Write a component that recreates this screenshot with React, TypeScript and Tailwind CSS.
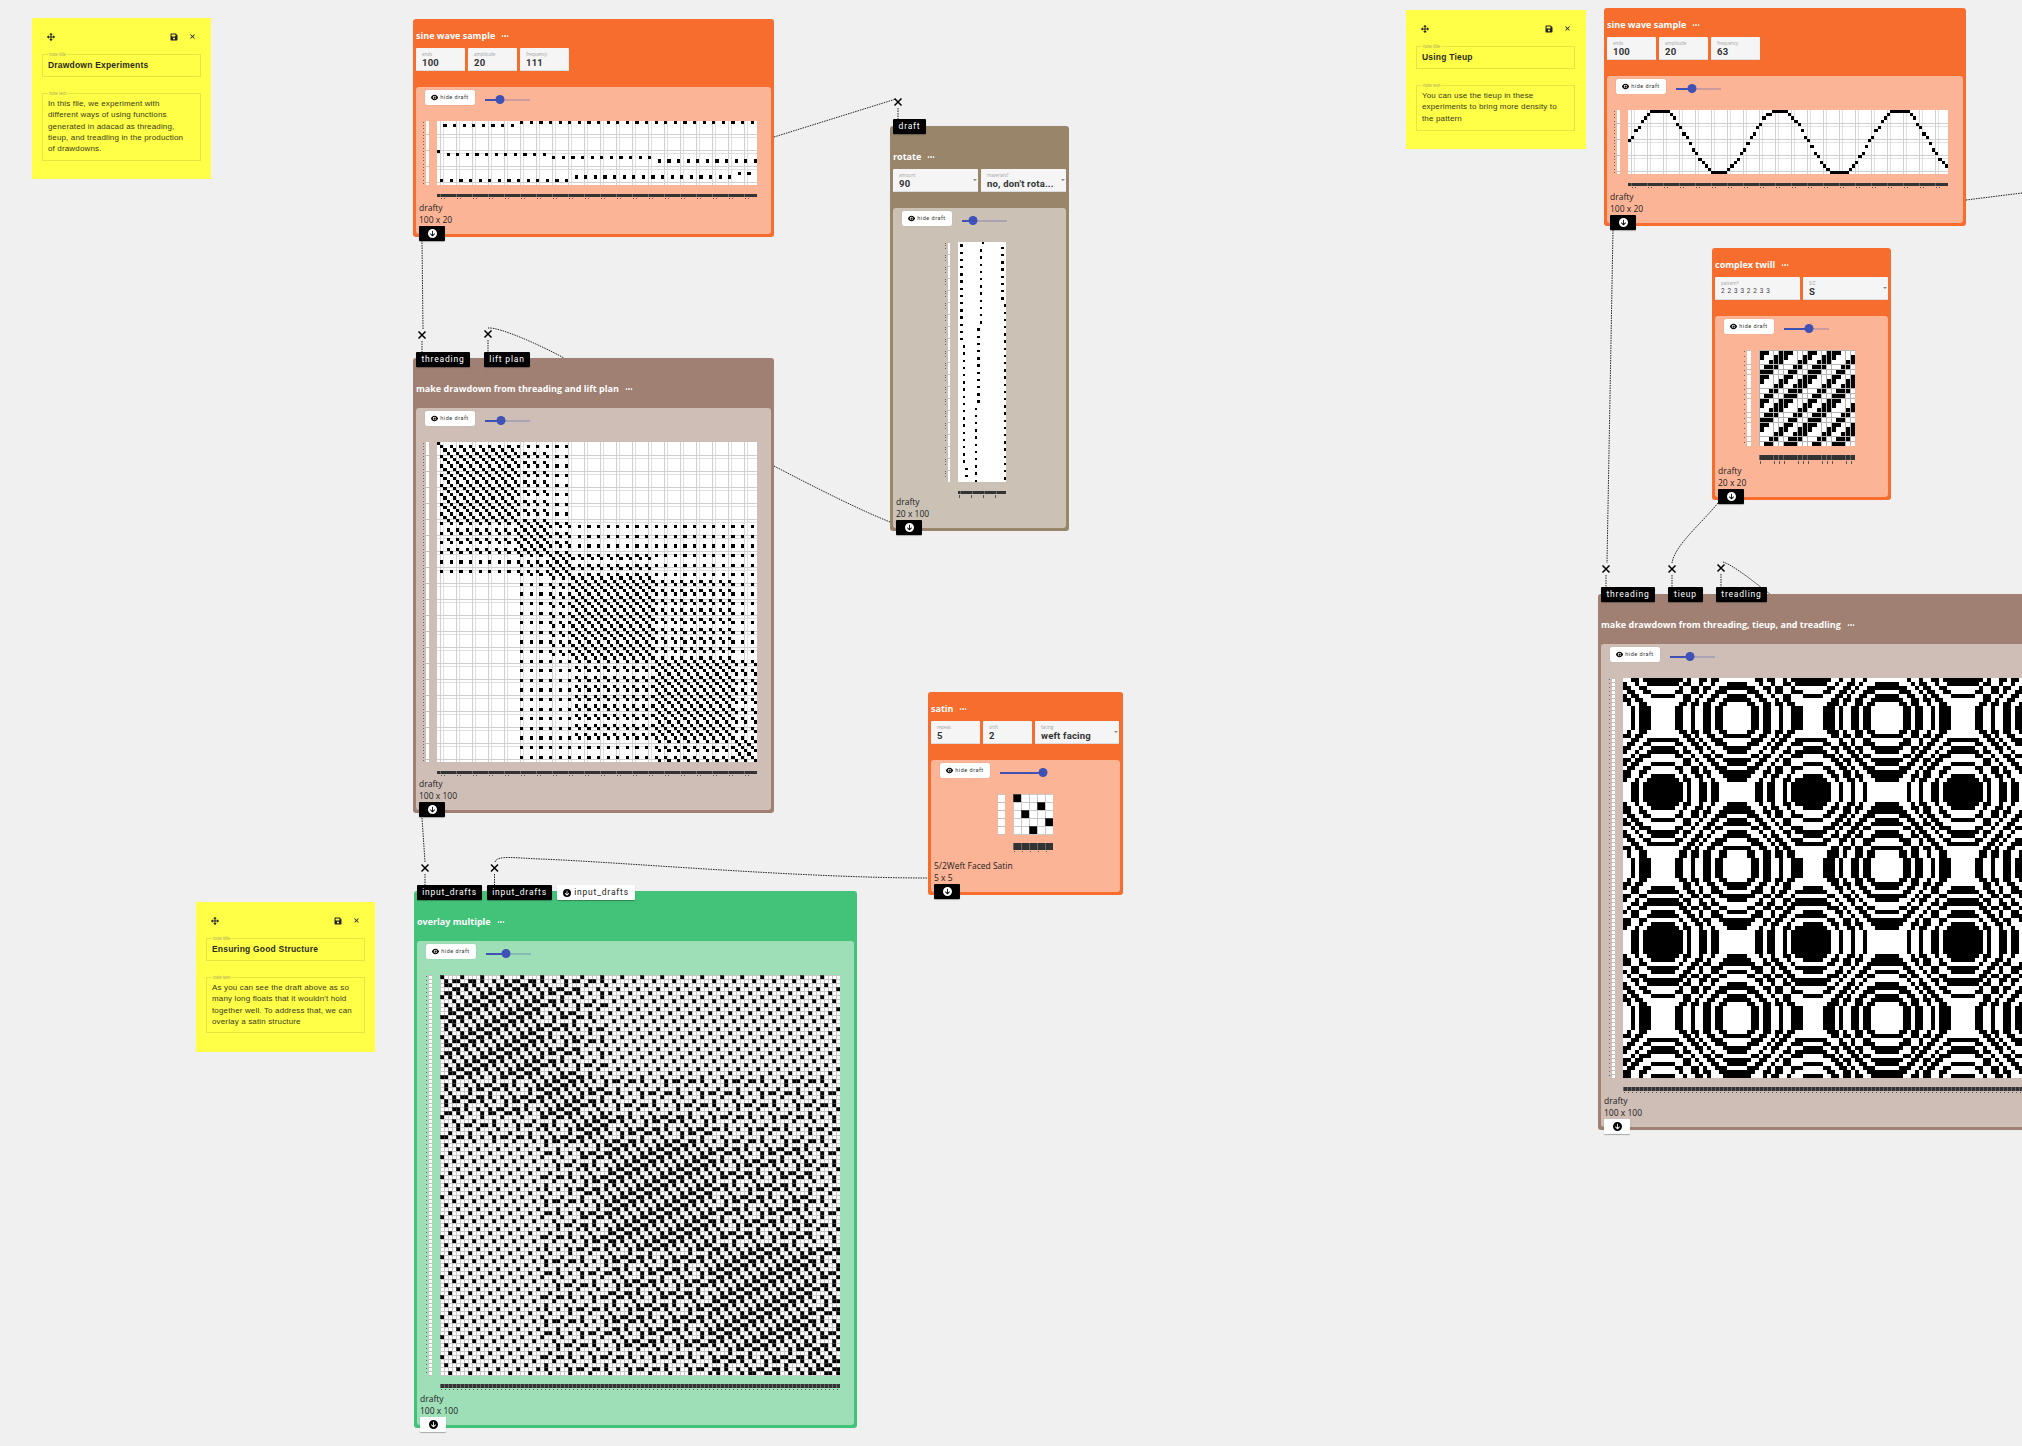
import type { ReactNode } from "react"
import { FaArrowsUpDownLeftRight, FaCircleArrowDown, FaEllipsis, FaEye, FaFloppyDisk, FaXmark } from "react-icons/fa6"

type Cell = (r: number, c: number) => boolean

// sine wave sample, frequency 111: three slow bands from aliasing
function waveA(c: number) {
  if (c % 3 === 2) return c < 25 ? 1 : 0
  if (c % 3 === 1) return c < 42 ? 18 : c < 93 ? 17 : 16
  if (c === 0) return 9
  return c < 35 ? 10 : c < 69 ? 11 : 12
}

// sine wave sample, frequency 63
function waveB(c: number) {
  const v = Math.floor(10 - 10.05 * Math.sin((2 * Math.PI * (c + 0.1)) / 37.5))
  return Math.max(0, Math.min(19, v))
}

const twillRow = [1, 1, 0, 0, 1, 1, 1, 0, 0, 0]
const satinCells = [0, 3, 1, 4, 2]

const sineA: Cell = (r, c) => waveA(c) === r
const sineB: Cell = (r, c) => waveB(c) === r
const rotated: Cell = (r, c) => 19 - waveA(r) === c
const drawdownA: Cell = (r, c) => waveA(r) === waveA(c)
const satin: Cell = (r, c) => satinCells[r % 5] === c % 5
const twill: Cell = (r, c) => twillRow[(r + c) % 10] === 1
const overlay: Cell = (r, c) => drawdownA(r, c) || satin(r, c)
const drawdownB: Cell = (r, c) => twillRow[(waveB(r) - waveB(c) + 107) % 10] === 1

// the canvas is scaled down, so only some of the cell borders survive
function gridPositions(n: number, cs: number, offset: number) {
  const total = Math.round(n * cs)
  const out: number[] = []
  if (Number.isInteger(cs)) {
    for (let p = 0; p <= total; p += cs) out.push(p)
    return out
  }
  if (cs === 3.2) {
    for (let p = offset; p < total; p += 16) out.push(p)
    return out
  }
  for (let p = 0; p < total; p++) {
    if (((p + 0.5) * (10 / cs)) % 10 < 1.2) out.push(p)
  }
  return out
}

function cellsPath(rows: number, cols: number, cs: number, on: Cell) {
  let d = ""
  for (let r = 0; r < rows; r++) {
    const y0 = Math.round(r * cs)
    const y1 = Math.round((r + 1) * cs)
    let c = 0
    while (c < cols) {
      if (!on(r, c)) {
        c++
        continue
      }
      let e = c
      while (e < cols && on(r, e)) e++
      d += `M${Math.round(c * cs)} ${y0}H${Math.round(e * cs)}V${y1}H${Math.round(c * cs)}z`
      c = e
    }
  }
  return d
}

interface DraftProps {
  rows: number
  cols: number
  cs: number
  on: Cell
  grid?: boolean
  gridTop?: boolean
  className?: string
}

function Draft({ rows, cols, cs, on, grid = true, gridTop = false, className }: DraftProps) {
  const W = Math.round(cols * cs)
  const H = Math.round(rows * cs)
  const barH = cs < 3.5 ? 3 : cs === 4 ? 4 : cs === 4.8 ? 5 : 7
  const stripW = cs === 8 ? 7 : cs === 4.8 ? 4 : cs === 2.4 ? 2 : 3
  const tickH = cs === 2.4 || cs === 4.8 ? 3 : 1
  const stripX = 12 - stripW
  const xs = gridPositions(cols, cs, 3)
  const ys = gridPositions(rows, cs, 13)
  const xsExtra = cs === 3.2 ? gridPositions(cols, cs, 6) : []
  const ysExtra = cs === 3.2 ? gridPositions(rows, cs, 16) : []
  const ticks = cs === 2.4 ? [0, 12, 24, 36] : [...xs, ...xsExtra]
  const notches = cs === 2.4 ? Array.from({ length: 20 }, (_, i) => i * 12) : ys
  const lines = (px: number[], py: number[]) => `${px.map((x) => `M${x + 0.5} 0V${H}`).join("")}${py.map((y) => `M0 ${y + 0.5}H${W}`).join("")}`
  const gridPath = lines(xs, ys)
  const height = H + 9 + barH + 6

  return (
    <svg width={W + 20} height={height} shapeRendering="crispEdges" className={`block shrink-0 ${className ?? ""}`}>
      <rect x={stripX} y={0} width={stripW} height={H} fill="#fff" />
      {notches.map((y) => (
        <rect key={y} x={stripX - 1} y={y} width={stripW + 1} height={1} fill="#c6c1bd" />
      ))}
      {Array.from({ length: rows }, (_, i) =>
        cs === 2.4 && i % 5 > 2 ? null : (
          <rect key={i} x={cs === 8 ? stripX - 8 : stripX - 3} y={Math.round(i * cs) + (cs === 8 ? 4 : 1)} width={cs === 8 ? 2 : 1} height={1} fill="#666" />
        ),
      )}
      <g transform="translate(20 0)">
        <rect width={W} height={H} fill="#fff" />
        {grid && !gridTop && <path d={lines(xsExtra, ysExtra)} stroke="#e0e0e0" strokeWidth={1} fill="none" />}
        {grid && !gridTop && <path d={gridPath} stroke={cs === 3.2 ? "#d0d0d0" : "#c9c9c9"} strokeWidth={1} fill="none" />}
        <path d={cellsPath(rows, cols, cs, on)} fill="#000" />
        {grid && Number.isInteger(cs) && <path d={gridPath} stroke="#c9c9c9" strokeOpacity={0.3} strokeWidth={1} fill="none" />}
        {grid && gridTop && <path d={gridPath} stroke="#b4b4b4" strokeWidth={1} fill="none" />}
        <rect y={H + 9} width={W} height={barH} fill="#333" />
        {xs.map((x) => (
          <rect key={x} x={x} y={H + 9} width={1} height={barH} fill="#666" />
        ))}
        {ticks.map((x) => (
          <rect key={x} x={x + 1} y={H + 10 + barH} width={1} height={tickH} fill="#555" />
        ))}
      </g>
    </svg>
  )
}

function Slider({ value }: { value: number }) {
  return (
    <div className="relative ml-[10px] mt-[5px] flex h-[9px] w-[45px] items-center">
      <div className="h-[2px] bg-[#3f51b5]" style={{ width: `${value * 100}%` }} />
      <div className="h-[2px] flex-1 bg-[#3f51b5]/25" />
      <div className="absolute h-[9px] w-[9px] -translate-x-1/2 rounded-full bg-[#3f51b5]" style={{ left: `${value * 100}%` }} />
    </div>
  )
}

function Param({ label, value, width, select, small }: { label: string; value: string; width: string; select?: boolean; small?: boolean }) {
  return (
    <div className={`relative h-full shrink-0 rounded-t-[1px] border-b border-[#dcdcdc] bg-[#f5f5f5] pl-[6px] pt-[3px] ${width}`}>
      <div className="text-[4.5px] leading-[6px] text-[#a3a3a3]">{label}</div>
      <div className={small ? "truncate text-[6.5px] leading-[11px] tracking-[0.6px] text-[#444] [font-family:'Roboto',sans-serif]" : "truncate text-[9.5px] font-bold leading-[11px] tracking-[0.2px] text-[#333] [font-family:'Roboto',sans-serif]"}>
        {value}
      </div>
      {select && <div className="absolute right-[1px] top-[10px] h-0 w-0 border-x-[2px] border-t-[2px] border-x-transparent border-t-[#888]" />}
    </div>
  )
}

function Pill({ children, width, light }: { children: ReactNode; width: string; light?: boolean }) {
  return (
    <div className={`flex h-[15px] items-center justify-center gap-[3px] rounded-[1px] text-[8.5px] tracking-[0.8px] shadow-[0_1px_1px_rgba(0,0,0,0.3)] [font-family:'Roboto',sans-serif] ${width} ${light ? "bg-white text-[#222]" : "bg-black text-white"}`}>
      {light && <FaCircleArrowDown className="text-[8px] text-black" />}
      {children}
    </div>
  )
}

const orange = { node: "border-[#f66d2e] bg-[#f66d2e]", panel: "bg-[#fcb496]" }
const brown = { node: "border-[#a08072] bg-[#a08072]", panel: "bg-[#cebeb6]" }
const tan = { node: "border-[#98856a] bg-[#98856a]", panel: "bg-[#cbc1b5]" }
const green = { node: "border-[#43c279] bg-[#43c279]", panel: "bg-[#9edfb8]" }

interface OpNodeProps {
  box: string
  theme: { node: string; panel: string }
  title: string
  params?: ReactNode
  inlets?: ReactNode
  inletTop?: string
  slider: number
  size: string
  name?: string
  lightButton?: boolean
  children: ReactNode
}

function OpNode({ box, theme, title, params, inlets, inletTop = "-top-[9px]", slider, size, name = "drafty", lightButton, children }: OpNodeProps) {
  return (
    <div className={`absolute flex flex-col rounded-[3px] border-[3px] ${box} ${theme.node}`}>
      {inlets && <div className={`absolute left-0 z-10 flex ${inletTop}`}>{inlets}</div>}
      <div className={`flex h-6 shrink-0 items-center gap-[6px] text-[9px] font-bold text-white ${inlets ? "mt-[16px]" : "mt-[2px]"}`}>
        {title}
        <FaEllipsis className="text-[8px]" />
      </div>
      {params && <div className="flex h-[23px] shrink-0 gap-[3px]">{params}</div>}
      <div className={`flex min-h-0 flex-1 flex-col rounded-[3px] ${theme.panel} ${params ? "mt-[16px]" : "mt-[7px]"}`}>
        <div className="mt-[3px] flex h-[15px] shrink-0 pl-[9px]">
          <div className="flex h-[15px] w-[50px] items-center justify-center gap-[2px] rounded-[2px] bg-white text-[5.5px] tracking-[0.5px] text-[#333] shadow-[0_0_1px_rgba(0,0,0,0.2)] [font-family:'Roboto',sans-serif]">
            <FaEye className="text-[7px] text-black" />
            hide draft
          </div>
          <Slider value={slider} />
        </div>
        <div className="mt-[16px] min-h-0 flex-1">{children}</div>
        <div className="pb-[8px] pl-[3px] text-[8.5px] leading-[12px] text-[#222]">
          <div>{name}</div>
          <div>{size}</div>
        </div>
      </div>
      <div className={`absolute -bottom-[7px] left-[3px] flex h-[15px] w-[26px] items-center justify-center rounded-[1px] shadow-[0_1px_1px_rgba(0,0,0,0.3)] ${lightButton ? "bg-white text-black" : "bg-black text-white"}`}>
        <FaCircleArrowDown className="text-[9px]" />
      </div>
    </div>
  )
}

function Note({ box, title, lines, bodyHeight }: { box: string; title: string; lines: string[]; bodyHeight: string }) {
  return (
    <div className={`absolute bg-[#ffff48] px-[10px] [font-family:'Liberation_Sans',sans-serif] ${box}`}>
      <div className="flex h-[36px] items-start pt-[15px] text-[#222]">
        <FaArrowsUpDownLeftRight className="ml-[5px] text-[8px]" />
        <FaFloppyDisk className="ml-auto mr-[11px] text-[8px]" />
        <FaXmark className="mr-[5px] text-[7px]" />
      </div>
      <div className="relative h-[23px] w-[159px] border border-[#e6e643] pl-[5px] text-[8.5px] font-bold leading-[21px] tracking-[0.2px] text-[#2b2b1c]">
        <span className="absolute -top-[3px] left-[5px] bg-[#ffff48] px-[1px] text-[4.5px] font-normal leading-[5px] tracking-normal text-[#a8a860]">note title</span>
        {title}
      </div>
      <div className={`relative mt-[16px] w-[159px] border border-[#e6e643] pl-[5px] pt-[4px] text-[8px] leading-[11.3px] tracking-[0.15px] text-[#3a3a20] ${bodyHeight}`}>
        <span className="absolute -top-[3px] left-[5px] bg-[#ffff48] px-[1px] text-[4.5px] leading-[5px] tracking-normal text-[#a8a860]">note text</span>
        {lines.map((l) => (
          <div key={l} className="whitespace-nowrap">
            {l}
          </div>
        ))}
      </div>
    </div>
  )
}

const wires = [
  "M422 240L423 329",
  "M422 341V352",
  "M488 340V352",
  "M488 328C500 327 540 345 564 358",
  "M774 137L896 99",
  "M898 108V119",
  "M774 466C820 490 860 510 890 522",
  "M422 818L425 862",
  "M425 874V885",
  "M494.5 874V885",
  "M495 862C497 855 515 858 540 859C620 862 800 878 928 878",
  "M1613 230L1607 563",
  "M1606 575V587",
  "M1718 503C1700 525 1675 545 1672 563",
  "M1672 575V587",
  "M1721 574V587",
  "M1723 562C1735 566 1755 583 1770 594",
  "M1966 200L2022 193",
]

const crosses = [
  [422, 335],
  [488, 334],
  [898, 102],
  [425, 868],
  [494.5, 868],
  [1606, 569],
  [1672, 569],
  [1721, 568],
]

export default function App() {
  return (
    <div className="relative h-[1446px] w-[2022px] overflow-hidden bg-[#f0f0f0] [font-family:'Open_Sans',sans-serif]">
      {/* connections */}
      <svg width={2022} height={1446} className="absolute inset-0">
        {wires.map((d) => (
          <path key={d} d={d} fill="none" stroke="#222" strokeWidth={1} strokeDasharray="1.5 1" />
        ))}
        {crosses.map(([x, y]) => (
          <path key={`${x}-${y}`} d={`M${x - 3.5} ${y - 3.5}L${x + 3.5} ${y + 3.5}M${x + 3.5} ${y - 3.5}L${x - 3.5} ${y + 3.5}`} stroke="#000" strokeWidth={1.5} />
        ))}
      </svg>

      {/* notes */}
      <Note
        box="left-[32px] top-[18px] h-[161px] w-[179px]"
        title="Drawdown Experiments"
        bodyHeight="h-[68px]"
        lines={["In this file, we experiment with", "different ways of using functions", "generated in adacad as threading,", "tieup, and treadling in the production", "of drawdowns."]}
      />
      <Note
        box="left-[196px] top-[902px] h-[150px] w-[179px]"
        title="Ensuring Good Structure"
        bodyHeight="h-[56px]"
        lines={["As you can see the draft above as so", "many long floats that it wouldn't hold", "together well. To address that, we can", "overlay a satin structure"]}
      />
      <Note
        box="left-[1406px] top-[10px] h-[139px] w-[180px]"
        title="Using Tieup"
        bodyHeight="h-[46px]"
        lines={["You can use the tieup in these", "experiments to bring more density to", "the pattern"]}
      />

      {/* left column */}
      <OpNode
        box="left-[413px] top-[19px] h-[218px] w-[361px]"
        theme={orange}
        title="sine wave sample"
        slider={0.33}
        size="100 x 20"
        params={
          <>
            <Param width="w-[49px]" label="ends" value="100" />
            <Param width="w-[49px]" label="amplitude" value="20" />
            <Param width="w-[49px]" label="frequency" value="111" />
          </>
        }
      >
        <Draft rows={20} cols={100} cs={3.2} on={sineA} className="ml-[1px]" />
      </OpNode>

      <OpNode
        box="left-[413px] top-[358px] h-[455px] w-[361px]"
        theme={brown}
        title="make drawdown from threading and lift plan"
        slider={0.35}
        size="100 x 100"
        inlets={
          <div className="flex gap-[14px]">
            <Pill width="w-[54px]">threading</Pill>
            <Pill width="w-[46px]">lift plan</Pill>
          </div>
        }
      >
        <Draft rows={100} cols={100} cs={3.2} on={drawdownA} className="ml-[1px]" />
      </OpNode>

      <OpNode
        box="left-[414px] top-[891px] h-[537px] w-[443px]"
        theme={green}
        title="overlay multiple"
        slider={0.45}
        size="100 x 100"
        lightButton
        inlets={
          <div className="flex gap-[5px]">
            <Pill width="w-[65px]">input_drafts</Pill>
            <Pill width="w-[65px]">input_drafts</Pill>
            <Pill width="w-[78px]" light>
              input_drafts
            </Pill>
          </div>
        }
      >
        <Draft rows={100} cols={100} cs={4} on={overlay} className="ml-[3px]" />
      </OpNode>

      {/* middle column */}
      <OpNode
        box="left-[890px] top-[126px] h-[405px] w-[179px]"
        theme={tan}
        title="rotate"
        slider={0.24}
        size="20 x 100"
        inletTop="-top-[10px]"
        inlets={<Pill width="w-[33px]">draft</Pill>}
        params={
          <>
            <Param width="w-[85px]" label="amount" value="90" select />
            <Param width="w-[85px]" label="materials?" value="no, don't rota..." select />
          </>
        }
      >
        <Draft rows={100} cols={20} cs={2.4} on={rotated} grid={false} className="ml-[45px]" />
      </OpNode>

      <OpNode
        box="left-[928px] top-[692px] h-[203px] w-[195px]"
        theme={orange}
        title="satin"
        slider={0.95}
        size="5 x 5"
        name="5/2Weft Faced Satin"
        params={
          <>
            <Param width="w-[49px]" label="repeat" value="5" />
            <Param width="w-[49px]" label="shift" value="2" />
            <Param width="w-[84px]" label="facing" value="weft facing" select />
          </>
        }
      >
        <Draft rows={5} cols={5} cs={8} on={satin} className="ml-[62px]" />
      </OpNode>

      {/* right column */}
      <OpNode
        box="left-[1604px] top-[8px] h-[218px] w-[362px]"
        theme={orange}
        title="sine wave sample"
        slider={0.35}
        size="100 x 20"
        params={
          <>
            <Param width="w-[49px]" label="ends" value="100" />
            <Param width="w-[49px]" label="amplitude" value="20" />
            <Param width="w-[49px]" label="frequency" value="63" />
          </>
        }
      >
        <Draft rows={20} cols={100} cs={3.2} on={sineB} className="ml-[1px]" />
      </OpNode>

      <OpNode
        box="left-[1712px] top-[248px] h-[252px] w-[179px]"
        theme={orange}
        title="complex twill"
        slider={0.55}
        size="20 x 20"
        params={
          <>
            <Param width="w-[85px]" label="pattern*" value="2 2 3 3 2 2 3 3" small />
            <Param width="w-[85px]" label="S/Z" value="S" select />
          </>
        }
      >
        <Draft rows={20} cols={20} cs={4.8} on={twill} gridTop className="ml-[24px]" />
      </OpNode>

      <OpNode
        box="left-[1598px] top-[594px] h-[536px] w-[500px]"
        theme={brown}
        title="make drawdown from threading, tieup, and treadling"
        slider={0.44}
        size="100 x 100"
        lightButton
        inletTop="-top-[10px]"
        inlets={
          <div className="flex gap-[13px]">
            <Pill width="w-[54px]">threading</Pill>
            <Pill width="w-[35px]">tieup</Pill>
            <Pill width="w-[51px]">treadling</Pill>
          </div>
        }
      >
        <Draft rows={100} cols={100} cs={4} on={drawdownB} grid={false} className="ml-[2px]" />
      </OpNode>
    </div>
  )
}
